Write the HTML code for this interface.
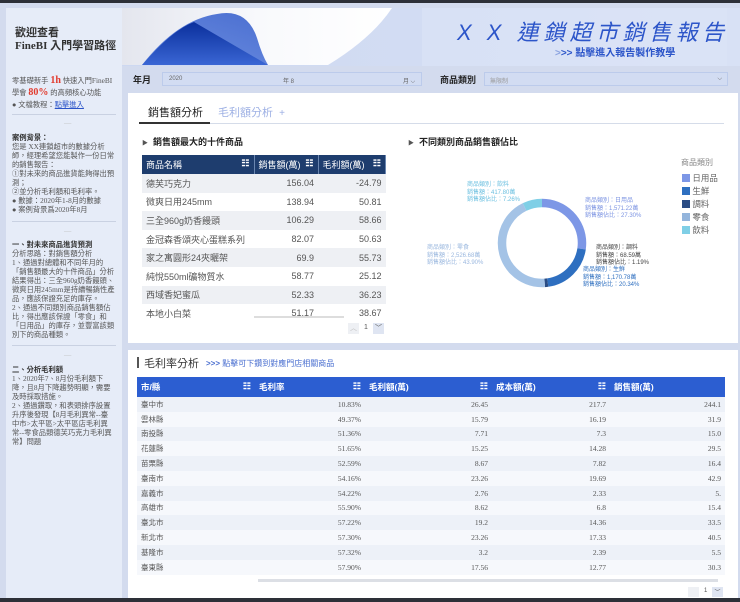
<!DOCTYPE html>
<html><head><meta charset="utf-8"><style>
*{margin:0;padding:0;box-sizing:border-box}
body{width:740px;height:602px;overflow:hidden;background:#d3dbee;font-family:"Liberation Sans","Noto Sans CJK TC",sans-serif;position:relative;color:#333}
.a{position:absolute;white-space:nowrap}
#left{position:absolute;left:6px;top:8px;width:116px;height:590px;background:#e6ecf8;font-family:"Liberation Serif","Noto Sans CJK TC",serif;font-size:7.3px;line-height:9px;color:#555;padding:0 6px}
#left .hr{position:absolute;left:6px;width:104px;border-top:1px solid #c9d1e2}
.card{position:absolute;background:#fff}
table{border-collapse:collapse}
.t1 td{height:18.6px;font-size:9px;color:#555;padding:0 4px}
.t1 th{height:19px;background:#1e3d6e;color:#fff;font-size:9px;font-weight:normal;text-align:left;padding:0 4px;border-right:1px solid #6a86b0}
.t2 td{height:14.8px;font-size:7.5px;color:#555;padding:0 4px;font-family:"Liberation Serif","Noto Sans CJK TC",serif}
.t2 th{height:20px;background:#2c5ed1;color:#fff;font-size:8.5px;text-align:left;padding:0 4px;font-weight:bold}
.r{text-align:right}
.ic{float:right;font-weight:bold;font-size:9px}
</style></head><body>
<div style="position:absolute;left:0;top:0;width:740px;height:3px;background:#2d3038"></div>
<div style="position:absolute;left:0;top:598px;width:740px;height:4px;background:#2d3038"></div>

<div id="left">
<div class="a" style="left:9px;top:19px;font-size:11px;line-height:13px;color:#333;font-weight:bold">歡迎查看<br>FineBI 入門學習路徑</div>
<div class="a" style="left:6px;top:67px;line-height:12px">零基礎新手 <b style="color:#e23b2e;font-size:10px">1h</b> 快速入門FineBI<br>學會 <b style="color:#e23b2e;font-size:10px">80%</b> 的高頻核心功能<br>● 文檔教程：<span style="color:#2a53c8;text-decoration:underline">點擊進入</span></div>
<div class="hr" style="top:106px"></div>
<div class="a" style="left:58px;top:110px;color:#bbb">—</div>
<div class="a" style="left:6px;top:125px"><b style="color:#333">案例背景：</b><br>您是 XX連鎖超市的數據分析<br>師，經理希望您能製作一份日常<br>的銷售報告：<br>①對未來的商品進貨能夠得出預<br>測；<br>②並分析毛利額和毛利率。<br>● 數據：2020年1-8月的數據<br>● 案例背景爲2020年8月</div>
<div class="hr" style="top:213px"></div>
<div class="a" style="left:58px;top:218px;color:#bbb">—</div>
<div class="a" style="left:6px;top:232px"><b style="color:#333">一、對未來商品進貨預測</b><br>分析思路：對銷售額分析<br>1、通過對總體和不同年月的<br>「銷售額最大的十件商品」分析<br>結果得出：三全960g奶香饅頭、<br>微爽日用245mm是持續暢銷性產<br>品，應該保證充足的庫存。<br>2、通過不同類別商品銷售額佔<br>比，得出應該保證「零食」和<br>「日用品」的庫存，並豐富該類<br>別下的商品種類。</div>
<div class="hr" style="top:337px"></div>
<div class="a" style="left:58px;top:342px;color:#bbb">—</div>
<div class="a" style="left:6px;top:357px"><b style="color:#333">二、分析毛利額</b><br>1、2020年7、8月份毛利額下<br>降，且8月下降趨勢明顯，需要<br>及時採取措施。<br>2、通過鑽取，和表頭排序設置<br>升序後發現【8月毛利異常--臺<br>中市&gt;太平區&gt;太平區店毛利異<br>常--零食品類德芙巧克力毛利異<br>常】問題</div>
</div>

<!-- banner -->
<svg class="a" style="left:122px;top:8px" width="618" height="58">
<defs>
<linearGradient id="wg" x1="0" x2="1"><stop offset="0" stop-color="#e4e6ee"/><stop offset="0.5" stop-color="#f8f9fc"/><stop offset="1" stop-color="#fff"/></linearGradient>
<linearGradient id="bg2" x1="0" x2="1"><stop offset="0" stop-color="#cdd8f1"/><stop offset="1" stop-color="#d8e1f5"/></linearGradient>
<linearGradient id="hump" x1="0" y1="1" x2="1" y2="0"><stop offset="0" stop-color="#5a82e0"/><stop offset="1" stop-color="#2b55c8"/></linearGradient>
<linearGradient id="dk" x1="0" y1="0" x2="0" y2="1"><stop offset="0" stop-color="#0a2f9c"/><stop offset="1" stop-color="#3a66d4"/></linearGradient>
</defs>
<rect width="618" height="58" fill="url(#bg2)"/>
<path d="M0 0H270Q250 30 206 57H0Z" fill="url(#wg)"/>
<path d="M20 57Q55 12 95 6Q125 0 135 30Q140 47 146 57Z" fill="url(#hump)" opacity=".85"/>
<path d="M20 57Q50 22 72 14L146 57Z" fill="url(#dk)"/>
<rect x="300" y="0" width="305" height="58" fill="#dce4f6" opacity=".6"/>
</svg>
<div class="a" style="left:457px;top:15px;font-size:22px;font-style:italic;color:#2c55c9;letter-spacing:4.5px">X X 連鎖超市銷售報告</div>
<div class="a" style="left:555px;top:44px;font-size:10px;color:#2c55c9;font-weight:bold"><span style="color:#8aa2e0">&gt;</span>&gt;&gt; 點擊進入報告製作教學</div>

<!-- filters -->
<div class="a" style="left:133px;top:73px;font-size:9px;font-weight:bold;color:#222">年月</div>
<div class="a" style="left:162px;top:72px;width:260px;height:14px;background:#d2dcf2;border:1px solid #bccbeb;font-size:6px;color:#666;padding:3px 0 0 6px">2020<span style="position:absolute;left:120px">年 8</span><span style="position:absolute;left:240px">月 ⌵</span></div>
<div class="a" style="left:440px;top:73px;font-size:9px;font-weight:bold;color:#222">商品類別</div>
<div class="a" style="left:484px;top:72px;width:244px;height:14px;background:#d2dcf2;border:1px solid #bccbeb;font-size:6px;color:#999;padding:3px 0 0 5px">無限制<span style="position:absolute;right:5px;color:#666">⌵</span></div>

<!-- card1 -->
<div class="card" style="left:128px;top:93px;width:610px;height:250px"></div>
<div class="a" style="left:148px;top:104px;font-size:11px;color:#222">銷售額分析</div>
<div class="a" style="left:218px;top:104px;font-size:11px;color:#9db0e4">毛利額分析 &nbsp;<span style="font-size:10px">+</span></div>
<div class="a" style="left:139px;top:123px;width:585px;border-top:1px solid #d5dce9"></div>
<div class="a" style="left:139px;top:122px;width:71px;border-top:2px solid #333"></div>
<div class="a" style="left:142px;top:135px;font-size:9px;font-weight:bold;color:#222"><span style="font-size:6px;color:#555">▶</span>&nbsp; 銷售額最大的十件商品</div>
<div class="a" style="left:408px;top:135px;font-size:9px;font-weight:bold;color:#222"><span style="font-size:6px;color:#555">▶</span>&nbsp; 不同類別商品銷售額佔比</div>

<div class="a" style="left:142px;top:155px;width:244px;height:163px;overflow:hidden">
<table class="t1" style="width:244px">
<tr><th style="width:112px">商品名稱<span class="ic">☷</span></th><th style="width:64px">銷售額(萬)<span class="ic">☷</span></th><th>毛利額(萬)<span class="ic">☷</span></th></tr>
<tr style="background:#eef0f4"><td>德芙巧克力</td><td class="r">156.04</td><td class="r">-24.79</td></tr>
<tr><td>微爽日用245mm</td><td class="r">138.94</td><td class="r">50.81</td></tr>
<tr style="background:#eef0f4"><td>三全960g奶香饅頭</td><td class="r">106.29</td><td class="r">58.66</td></tr>
<tr><td>金冠森香頌夾心蛋糕系列</td><td class="r">82.07</td><td class="r">50.63</td></tr>
<tr style="background:#eef0f4"><td>家之寓圓形24夾曬架</td><td class="r">69.9</td><td class="r">55.73</td></tr>
<tr><td>純悅550ml礦物質水</td><td class="r">58.77</td><td class="r">25.12</td></tr>
<tr style="background:#eef0f4"><td>西域香妃蜜瓜</td><td class="r">52.33</td><td class="r">36.23</td></tr>
<tr><td>本地小白菜</td><td class="r">51.17</td><td class="r">38.67</td></tr>
</table></div>
<div class="a" style="left:254px;top:316px;width:90px;height:2px;background:#ddd"></div>
<div class="a" style="left:348px;top:323px;width:11px;height:11px;background:#eef0f4;font-size:7px;color:#bbb;text-align:center">︿</div>
<div class="a" style="left:364px;top:324px;font-size:7px;color:#555">1</div>
<div class="a" style="left:373px;top:323px;width:11px;height:11px;background:#dfe5f2;font-size:7px;color:#555;text-align:center">﹀</div>

<svg class="a" style="left:497px;top:198px" width="90" height="90">
<g transform="rotate(-90 45 45)" fill="none" stroke-width="8.5">
<circle cx="45" cy="45" r="40" stroke="#7d97e6" stroke-dasharray="68.6 251.3" stroke-dashoffset="0"/>
<circle cx="45" cy="45" r="40" stroke="#2e6fc0" stroke-dasharray="51.1 251.3" stroke-dashoffset="-68.6"/>
<circle cx="45" cy="45" r="40" stroke="#2a4c84" stroke-dasharray="3 251.3" stroke-dashoffset="-119.7"/>
<circle cx="45" cy="45" r="40" stroke="#a4c3e6" stroke-dasharray="110.3 251.3" stroke-dashoffset="-122.7"/>
<circle cx="45" cy="45" r="40" stroke="#7fcfe6" stroke-dasharray="18.3 251.3" stroke-dashoffset="-233"/>
</g></svg>
<div class="a" style="left:467px;top:182px;font-size:6px;line-height:7.5px;color:#6cc0e0">商品類別：飲料<br>銷售額：417.80萬<br>銷售額佔比：7.26%</div>
<div class="a" style="left:585px;top:198px;font-size:6px;line-height:7.5px;color:#7b93e2">商品類別：日用品<br>銷售額：1,571.22萬<br>銷售額佔比：27.30%</div>
<div class="a" style="left:427px;top:245px;font-size:6px;line-height:7.5px;color:#9bb8df">商品類別：零食<br>銷售額：2,526.68萬<br>銷售額佔比：43.90%</div>
<div class="a" style="left:596px;top:245px;font-size:6px;line-height:7.5px;color:#444">商品類別：調料<br>銷售額：68.59萬<br>銷售額佔比：1.19%</div>
<div class="a" style="left:583px;top:267px;font-size:6px;line-height:7.5px;color:#2e6fc0">商品類別：生鮮<br>銷售額：1,170.78萬<br>銷售額佔比：20.34%</div>

<div class="a" style="left:681px;top:157px;font-size:8px;color:#888">商品類別</div>
<div class="a" style="left:682px;top:172px;font-size:8.5px;line-height:13px;color:#666">
<div><span style="display:inline-block;width:8px;height:8px;background:#7d97e6;vertical-align:-1px"></span> 日用品</div>
<div><span style="display:inline-block;width:8px;height:8px;background:#2e6fc0;vertical-align:-1px"></span> 生鮮</div>
<div><span style="display:inline-block;width:8px;height:8px;background:#2a4c84;vertical-align:-1px"></span> 調料</div>
<div><span style="display:inline-block;width:8px;height:8px;background:#94b5dc;vertical-align:-1px"></span> 零食</div>
<div><span style="display:inline-block;width:8px;height:8px;background:#7fcfe6;vertical-align:-1px"></span> 飲料</div>
</div>

<!-- card2 -->
<div class="card" style="left:128px;top:350px;width:610px;height:248px"></div>
<div class="a" style="left:137px;top:357px;width:2px;height:11px;background:#555"></div>
<div class="a" style="left:144px;top:355px;font-size:11px;color:#333">毛利率分析</div>
<div class="a" style="left:206px;top:358px;font-size:8px;color:#4a6fd0"><b>&gt;&gt;&gt;</b> 點擊可下鑽到對應門店相關商品</div>
<div class="a" style="left:137px;top:377px;width:588px;height:200px;overflow:hidden">
<table class="t2" style="width:600px">
<tr><th style="width:118px">市/縣<span class="ic">☷</span></th><th style="width:110px">毛利率<span class="ic">☷</span></th><th style="width:127px">毛利額(萬)<span class="ic">☷</span></th><th style="width:118px">成本額(萬)<span class="ic">☷</span></th><th>銷售額(萬)<span class="ic">☷</span></th></tr>
<tr style="background:#edf1f8"><td>臺中市</td><td class="r">10.83%</td><td class="r">26.45</td><td class="r">217.7</td><td class="r" style="padding-right:16px">244.1</td></tr>
<tr style="background:#f6f8fc"><td>雲林縣</td><td class="r">49.37%</td><td class="r">15.79</td><td class="r">16.19</td><td class="r" style="padding-right:16px">31.9</td></tr>
<tr style="background:#edf1f8"><td>南投縣</td><td class="r">51.36%</td><td class="r">7.71</td><td class="r">7.3</td><td class="r" style="padding-right:16px">15.0</td></tr>
<tr style="background:#f6f8fc"><td>花蓮縣</td><td class="r">51.65%</td><td class="r">15.25</td><td class="r">14.28</td><td class="r" style="padding-right:16px">29.5</td></tr>
<tr style="background:#edf1f8"><td>苗栗縣</td><td class="r">52.59%</td><td class="r">8.67</td><td class="r">7.82</td><td class="r" style="padding-right:16px">16.4</td></tr>
<tr style="background:#f6f8fc"><td>臺南市</td><td class="r">54.16%</td><td class="r">23.26</td><td class="r">19.69</td><td class="r" style="padding-right:16px">42.9</td></tr>
<tr style="background:#edf1f8"><td>嘉義市</td><td class="r">54.22%</td><td class="r">2.76</td><td class="r">2.33</td><td class="r" style="padding-right:16px">5.</td></tr>
<tr style="background:#f6f8fc"><td>高雄市</td><td class="r">55.90%</td><td class="r">8.62</td><td class="r">6.8</td><td class="r" style="padding-right:16px">15.4</td></tr>
<tr style="background:#edf1f8"><td>臺北市</td><td class="r">57.22%</td><td class="r">19.2</td><td class="r">14.36</td><td class="r" style="padding-right:16px">33.5</td></tr>
<tr style="background:#f6f8fc"><td>新北市</td><td class="r">57.30%</td><td class="r">23.26</td><td class="r">17.33</td><td class="r" style="padding-right:16px">40.5</td></tr>
<tr style="background:#edf1f8"><td>基隆市</td><td class="r">57.32%</td><td class="r">3.2</td><td class="r">2.39</td><td class="r" style="padding-right:16px">5.5</td></tr>
<tr style="background:#f6f8fc"><td>臺東縣</td><td class="r">57.90%</td><td class="r">17.56</td><td class="r">12.77</td><td class="r" style="padding-right:16px">30.3</td></tr>
</table></div>
<div class="a" style="left:258px;top:579px;width:460px;height:3px;background:#dcdfe5"></div>
<div class="a" style="left:688px;top:587px;width:11px;height:10px;background:#eef0f4"></div>
<div class="a" style="left:704px;top:588px;font-size:6px;color:#555">1</div>
<div class="a" style="left:712px;top:587px;width:11px;height:10px;background:#dfe5f2;font-size:6px;text-align:center;color:#555">﹀</div>
</body></html>
